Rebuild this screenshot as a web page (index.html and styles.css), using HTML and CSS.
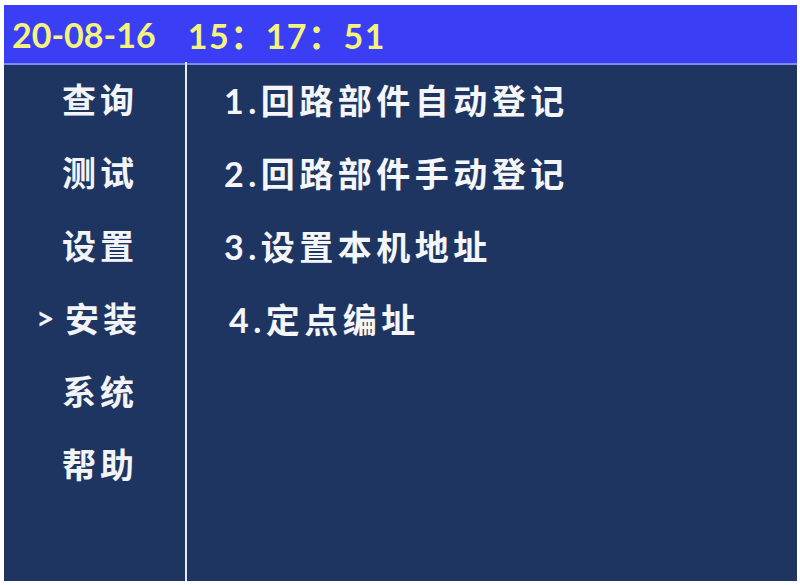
FILE: index.html
```html
<!DOCTYPE html>
<html lang="zh-CN">
<head>
<meta charset="utf-8">
<title>安装</title>
<link rel="stylesheet" href="styles.css">
</head>
<body>
<div class="screen">
  <header class="topbar">
    <span class="date">20-08-16</span>
    <span class="time">15：17：51</span>
  </header>
  <div class="main">
    <nav class="menu">
      <div class="menu-item">查询</div>
      <div class="menu-item">测试</div>
      <div class="menu-item">设置</div>
      <div class="menu-item selected"><span class="marker">&gt;</span>安装</div>
      <div class="menu-item">系统</div>
      <div class="menu-item">帮助</div>
    </nav>
    <section class="content">
      <div class="option">1.回路部件自动登记</div>
      <div class="option">2.回路部件手动登记</div>
      <div class="option">3.设置本机地址</div>
      <div class="option indent">4.定点编址</div>
    </section>
  </div>
</div>
</body>
</html>
```

FILE: styles.css
```css
html, body {
  margin: 0;
  padding: 0;
  background: #ffffff;
}
body {
  font-family: Lato, "Noto Sans CJK SC", sans-serif;
}
.screen {
  margin: 5px 3px 0 4px;
  width: 793px;
  height: 576px;
  display: flex;
  flex-direction: column;
  background: #1f3561;
}
.topbar {
  height: 58px;
  background: #3a3ef4;
  border-bottom: 2px solid #7e8cf2;
  display: flex;
  align-items: center;
  padding-left: 8px;
  gap: 32px;
  color: #f4f47c;
  font-weight: 700;
  font-size: 34px;
  box-sizing: content-box;
}
.time {
  letter-spacing: 1.5px;
}
.main {
  flex: 1;
  display: flex;
  min-height: 0;
}
.menu {
  width: 181px;
  border-right: 2px solid #e8ecf6;
  display: flex;
  flex-direction: column;
  margin-top: -3px;
}
.menu-item {
  height: 73px;
  display: flex;
  align-items: center;
  padding-left: 58px;
  color: #f2f4f8;
  font-weight: 700;
  font-size: 34px;
  letter-spacing: 4px;
}
.menu-item.selected {
  padding-left: 32px;
}
.marker {
  font-family: Lato, sans-serif;
  font-size: 32px;
  width: 29px;
  letter-spacing: 0;
}
.content {
  flex: 1;
  display: flex;
  flex-direction: column;
  margin-top: -2px;
  padding-left: 37px;
}
.option {
  height: 73px;
  display: flex;
  align-items: center;
  color: #f4f6fa;
  font-weight: 700;
  font-size: 34px;
  letter-spacing: 4.5px;
}
.option.indent {
  padding-left: 5px;
}
```
